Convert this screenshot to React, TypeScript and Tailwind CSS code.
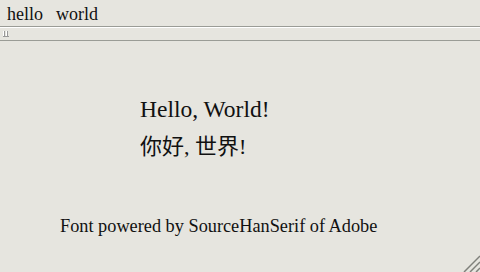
import React from "react";

export default function App() {
  const serif = { fontFamily: '"Liberation Serif", "Noto Sans CJK SC", serif' };
  return (
    <div className="w-[480px] h-[272px] bg-[#e6e5df] flex flex-col text-[#111] relative overflow-hidden" style={serif}>
      <div className="h-[26px] flex items-center gap-[13px] pl-[7px] pt-[1px] text-[18px] leading-none">
        <span>hello</span>
        <span>world</span>
      </div>
      <div className="h-px bg-[#9a9c96]" />
      <div className="h-px bg-white" />
      <div className="h-[12px] flex items-center pl-[3px]">
        <svg width="7" height="6" viewBox="0 0 7 6">
          <rect x="0" y="0" width="1" height="6" fill="#fff" />
          <rect x="1" y="0" width="1" height="6" fill="#999" />
          <rect x="3" y="0" width="1" height="6" fill="#fff" />
          <rect x="4" y="0" width="1" height="6" fill="#999" />
          <rect x="0" y="5" width="6" height="1" fill="#999" />
        </svg>
      </div>
      <div className="h-px bg-[#9a9c96]" />
      <div className="flex-1 flex flex-col">
        <div className="pl-[140px] pt-[53px] text-[23.5px] leading-[30px]">Hello, World!</div>
        <div className="pl-[140px] pt-[8px] text-[22px] leading-[30px]">你好, 世界!</div>
        <div className="pl-[60px] pt-[53px] text-[18.3px] leading-[22px]">Font powered by SourceHanSerif of Adobe</div>
      </div>
      <svg className="absolute right-0 bottom-0" width="18" height="18" viewBox="0 0 18 18">
        <path d="M18 2 L2 18" stroke="#7f807b" strokeWidth="1.5" />
        <path d="M18 8 L8 18" stroke="#7f807b" strokeWidth="1.5" />
        <path d="M18 14 L14 18" stroke="#7f807b" strokeWidth="1.5" />
      </svg>
    </div>
  );
}
